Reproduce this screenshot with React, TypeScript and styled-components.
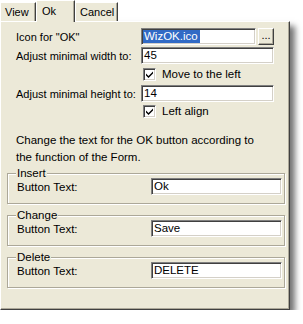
import styled, { createGlobalStyle } from "styled-components";

const GlobalStyle = createGlobalStyle`
  html, body {
    margin: 0;
    background: #ffffff;
  }
  body {
    font-family: "Liberation Sans", Arial, sans-serif;
    font-size: 11px;
    color: #000;
  }
`;

const Window = styled.div`
  width: 290px;
`;

const TabStrip = styled.div`
  display: flex;
  align-items: flex-end;
  height: 21px;
  position: relative;
  z-index: 1;
`;

const Tab = styled.div<{ $active?: boolean; $width: number }>`
  box-sizing: border-box;
  width: ${(p) => p.$width}px;
  height: ${(p) => (p.$active ? 22 : 19)}px;
  margin-bottom: ${(p) => (p.$active ? -1 : 0)}px;
  padding: ${(p) => (p.$active ? "4px 0 0 5px" : "3px 0 0 4px")};
  background: #ece9d8;
  border-top: 1px solid #ffffff;
  border-left: 1px solid #ffffff;
  border-right: 1px solid #404040;
  box-shadow: inset -1px 0 0 #aca899;
  font-size: 11px;
  line-height: 13px;
  white-space: nowrap;
`;

const Panel = styled.div`
  box-sizing: border-box;
  height: 289px;
  padding: 6px 6px 0 6px;
  background: #ece9d8;
  border-top: 1px solid #ffffff;
  border-left: 1px solid #ffffff;
  border-right: 1px solid #404040;
  border-bottom: 1px solid #404040;
  box-shadow: inset -1px -1px 0 #aca899, 5px 5px 6px rgba(0, 0, 0, 0.55);
  display: flex;
  flex-direction: column;
`;

const Row = styled.div<{ $top?: number }>`
  display: flex;
  align-items: center;
  height: 17px;
  margin-top: ${(p) => p.$top ?? 0}px;
  padding-left: 9px;
`;

const Label = styled.span<{ $width: number }>`
  width: ${(p) => p.$width}px;
  flex: none;
  white-space: nowrap;
`;

const Field = styled.div<{ $width: number }>`
  box-sizing: border-box;
  width: ${(p) => p.$width}px;
  height: 17px;
  flex: none;
  padding: 1px 0 0 2px;
  background: #ffffff;
  border: 1px solid;
  border-color: #808080 #ffffff #ffffff #808080;
  box-shadow: inset 1px 1px 0 #404040, inset -1px -1px 0 #d4d0c8;
  font-size: 11.5px;
  line-height: 13px;
  white-space: nowrap;
  overflow: hidden;
`;

const Selected = styled.span`
  display: inline-block;
  height: 13px;
  margin-left: -1px;
  padding: 0 2px 0 1px;
  background: #316ac5;
  color: #ffffff;
`;

const BrowseButton = styled.div`
  box-sizing: border-box;
  width: 16px;
  height: 17px;
  margin-left: 2px;
  flex: none;
  background: #ece9d8;
  border: 1px solid;
  border-color: #ffffff #404040 #404040 #ffffff;
  box-shadow: inset -1px -1px 0 #aca899;
  text-align: center;
  font-size: 11px;
  line-height: 12px;
`;

const CheckRow = styled.div<{ $top?: number }>`
  display: flex;
  align-items: center;
  height: 14px;
  margin-top: ${(p) => p.$top ?? 0}px;
  padding-left: 136px;
  gap: 6px;
  font-size: 11.5px;
`;

const CheckBox = styled.div`
  box-sizing: border-box;
  width: 13px;
  height: 13px;
  background: #ffffff;
  border: 1px solid;
  border-color: #808080 #ffffff #ffffff #808080;
  box-shadow: inset 1px 1px 0 #404040, inset -1px -1px 0 #d4d0c8;
  display: flex;
  align-items: center;
  justify-content: center;
`;

const Note = styled.p`
  margin: 14px 0 0 9px;
  font-size: 11.5px;
  line-height: 17px;
`;

const Group = styled.div<{ $top: number }>`
  position: relative;
  box-sizing: border-box;
  height: 31px;
  margin: ${(p) => p.$top}px 0 0 0;
  width: 278px;
  border: 1px solid #aca899;
  box-shadow: inset 1px 1px 0 #ffffff, 1px 1px 0 #ffffff;
  padding-top: 4px;
`;

const Legend = styled.span`
  position: absolute;
  top: -8px;
  left: 8px;
  padding: 0 1px;
  background: #ece9d8;
  font-size: 11.5px;
  line-height: 14px;
`;

const GroupRow = styled.div`
  display: flex;
  align-items: center;
  padding-left: 9px;
  font-size: 11.5px;
`;

function Check() {
  return (
    <CheckBox>
      <svg width="9" height="9" viewBox="0 0 9 9">
        <path d="M1 3.5 L3.5 6 L8 1.5 L8 3.5 L3.5 8 L1 5.5 Z" fill="#000" />
      </svg>
    </CheckBox>
  );
}

function TextGroup({ title, value, top }: { title: string; value: string; top: number }) {
  return (
    <Group $top={top}>
      <Legend>{title}</Legend>
      <GroupRow>
        <Label $width={134}>Button Text:</Label>
        <Field $width={131}>{value}</Field>
      </GroupRow>
    </Group>
  );
}

export default function App() {
  return (
    <>
      <GlobalStyle />
      <Window>
        <TabStrip>
          <Tab $width={36}>View</Tab>
          <Tab $width={39} $active>Ok</Tab>
          <Tab $width={43}>Cancel</Tab>
        </TabStrip>
        <Panel>
          <Row>
            <Label $width={125}>Icon for "OK"</Label>
            <Field $width={115}>
              <Selected>WizOK.ico</Selected>
            </Field>
            <BrowseButton>...</BrowseButton>
          </Row>
          <Row $top={2}>
            <Label $width={125}>Adjust minimal width to:</Label>
            <Field $width={133}>45</Field>
          </Row>
          <CheckRow $top={3}>
            <Check />
            Move to the left
          </CheckRow>
          <Row $top={4}>
            <Label $width={125}>Adjust minimal height to:</Label>
            <Field $width={133}>14</Field>
          </Row>
          <CheckRow $top={2}>
            <Check />
            Left align
          </CheckRow>
          <Note>
            Change the text for the OK button according to
            <br />
            the function of the Form.
          </Note>
          <TextGroup title="Insert" value="Ok" top={7} />
          <TextGroup title="Change" value="Save" top={11} />
          <TextGroup title="Delete" value="DELETE" top={11} />
        </Panel>
      </Window>
    </>
  );
}
